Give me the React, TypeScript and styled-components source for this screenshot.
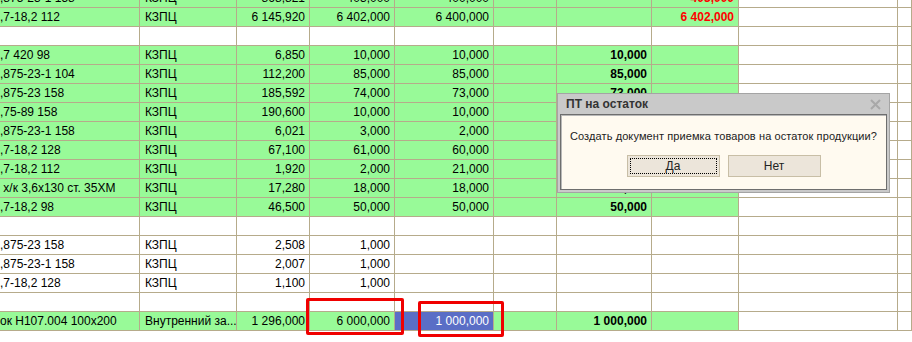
import React from 'react'
import styled, { createGlobalStyle } from 'styled-components'

const COLS = [140, 97, 73, 85, 99, 63, 95, 87, 159, 14]
const GREEN_COLS = 8

type Row = { g: boolean; c: string[]; blue?: number }

const rows: Row[] = [
  { g: true, c: [',875-23-1 158', 'КЗПЦ', '868,821', '403,000', '400,000', '', '', '403,000'] },
  { g: true, c: [',7-18,2 112', 'КЗПЦ', '6 145,920', '6 402,000', '6 400,000', '', '', '6 402,000'] },
  { g: false, c: [] },
  { g: true, c: [',7 420 98', 'КЗПЦ', '6,850', '10,000', '10,000', '', '10,000', ''] },
  { g: true, c: [',875-23-1 104', 'КЗПЦ', '112,200', '85,000', '85,000', '', '85,000', ''] },
  { g: true, c: [',875-23 158', 'КЗПЦ', '185,592', '74,000', '73,000', '', '73,000', ''] },
  { g: true, c: [',75-89 158', 'КЗПЦ', '190,600', '10,000', '10,000', '', '10,000', ''] },
  { g: true, c: [',875-23-1 158', 'КЗПЦ', '6,021', '3,000', '2,000', '', '2,000', ''] },
  { g: true, c: [',7-18,2 128', 'КЗПЦ', '67,100', '61,000', '60,000', '', '60,000', ''] },
  { g: true, c: [',7-18,2 112', 'КЗПЦ', '1,920', '2,000', '21,000', '', '21,000', ''] },
  { g: true, c: [' х/к 3,6х130 ст. 35ХМ', 'КЗПЦ', '17,280', '18,000', '18,000', '', '18,000', ''] },
  { g: true, c: [',7-18,2 98', 'КЗПЦ', '46,500', '50,000', '50,000', '', '50,000', ''] },
  { g: false, c: [] },
  { g: false, c: [',875-23 158', 'КЗПЦ', '2,508', '1,000'] },
  { g: false, c: [',875-23-1 158', 'КЗПЦ', '2,007', '1,000'] },
  { g: false, c: [',7-18,2 128', 'КЗПЦ', '1,100', '1,000'] },
  { g: false, c: [] },
  { g: true, c: ['ок Н107.004 100х200', 'Внутренний за...', '1 296,000', '6 000,000', '1 000,000', '', '1 000,000', ''], blue: 4 },
]

export default function App() {
  return (
    <>
      <GlobalStyle />
      <Page>
        <Grid>
          {rows.map((row, r) =>
            COLS.map((_, i) => {
              const text = row.c[i] || ''
              let bg = 'white'
              if (row.g && i < GREEN_COLS) bg = 'green'
              if (row.blue === i) bg = 'blue'
              return (
                <Cell
                  key={r + '-' + i}
                  $bg={bg}
                  $align={i < 2 ? 'left' : 'right'}
                  $first={i === 0}
                  $weight={i >= 6 ? 'bold' : 'normal'}
                  $red={i === 7}
                >
                  {text}
                </Cell>
              )
            })
          )}
        </Grid>

        <Mark style={{ left: 306, top: 298, width: 98, height: 37 }} />
        <Mark style={{ left: 418, top: 301, width: 86, height: 36 }} />

        <Dialog>
          <TitleBar>
            <Title>ПТ на остаток</Title>
            <Close>
              <svg width="11" height="11" viewBox="0 0 11 11">
                <path d="M1 1 L10 10 M10 1 L1 10" stroke="#a8a8a8" strokeWidth="2" />
              </svg>
            </Close>
          </TitleBar>
          <Body>
            <Message>Создать документ приемка товаров на остаток продукции?</Message>
            <Buttons>
              <Button $focused>Да</Button>
              <Button>Нет</Button>
            </Buttons>
          </Body>
        </Dialog>
      </Page>
    </>
  )
}

const GlobalStyle = createGlobalStyle`
  html, body {
    margin: 0;
    padding: 0;
    background: #ffffff;
    overflow: hidden;
  }
  body {
    font-family: "Liberation Sans", Arial, sans-serif;
  }
`

const Page = styled.div`
  position: relative;
  width: 912px;
  height: 342px;
  overflow: hidden;
  background: #ffffff;
`

const Grid = styled.div`
  display: grid;
  grid-template-columns: ${COLS.map((w) => w + 'px').join(' ')};
  grid-auto-rows: 19px;
  margin-top: -11px;
`

const bgColors: Record<string, string> = {
  green: '#98fa98',
  white: '#ffffff',
  blue: '#5a6ec6',
}

const Cell = styled.div<{ $bg: string; $align: string; $first: boolean; $weight: string; $red: boolean }>`
  box-sizing: border-box;
  border-right: 1px solid #b6ab8b;
  border-bottom: 1px solid #b6ab8b;
  background: ${(p) => bgColors[p.$bg]};
  color: ${(p) => (p.$bg === 'blue' ? '#ffffff' : p.$red ? '#ff0000' : '#000000')};
  font-size: 12px;
  font-weight: ${(p) => p.$weight};
  line-height: 18px;
  text-align: ${(p) => p.$align};
  padding: ${(p) => (p.$align === 'right' ? '0 4px 0 0' : p.$first ? '0 0 0 0' : '0 0 0 5px')};
  white-space: pre;
  overflow: hidden;
`

const Mark = styled.div`
  position: absolute;
  box-sizing: border-box;
  border: 3px solid #f00000;
  border-radius: 2px;
`

const Dialog = styled.div`
  position: absolute;
  left: 557px;
  top: 93px;
  width: 333px;
  height: 100px;
  box-sizing: border-box;
  background: #c9c9c9;
  border: 1px solid #a4a4a4;
  padding: 0 2px 2px 2px;
  display: flex;
  flex-direction: column;
  font-family: "Liberation Sans", Arial, sans-serif;
`

const TitleBar = styled.div`
  height: 20px;
  display: flex;
  align-items: center;
  justify-content: space-between;
  padding: 0 6px 0 6px;
`

const Title = styled.div`
  font-size: 12px;
  font-weight: bold;
  color: #333333;
`

const Close = styled.div`
  display: flex;
  align-items: center;
`

const Body = styled.div`
  flex: 1;
  box-sizing: border-box;
  background: #fffaf0;
  border: 1px solid #6e6e6e;
  box-shadow: inset 1px 1px 0 #b8b8b8;
  display: flex;
  flex-direction: column;
  align-items: center;
  padding-top: 14px;
`

const Message = styled.div`
  font-size: 11px;
  letter-spacing: 0.1px;
  white-space: nowrap;
  color: #222222;
  line-height: 14px;
`

const Buttons = styled.div`
  display: flex;
  gap: 8px;
  margin-top: 12px;
`

const Button = styled.div<{ $focused?: boolean }>`
  position: relative;
  width: 93px;
  height: 22px;
  box-sizing: border-box;
  background: #ece5da;
  border: 1px solid #c8bea6;
  display: flex;
  align-items: center;
  justify-content: center;
  font-size: 12px;
  color: #222222;

  &::after {
    content: '';
    position: absolute;
    inset: 2px;
    border: ${(p) => (p.$focused ? '1px dotted #000000' : 'none')};
  }
`
